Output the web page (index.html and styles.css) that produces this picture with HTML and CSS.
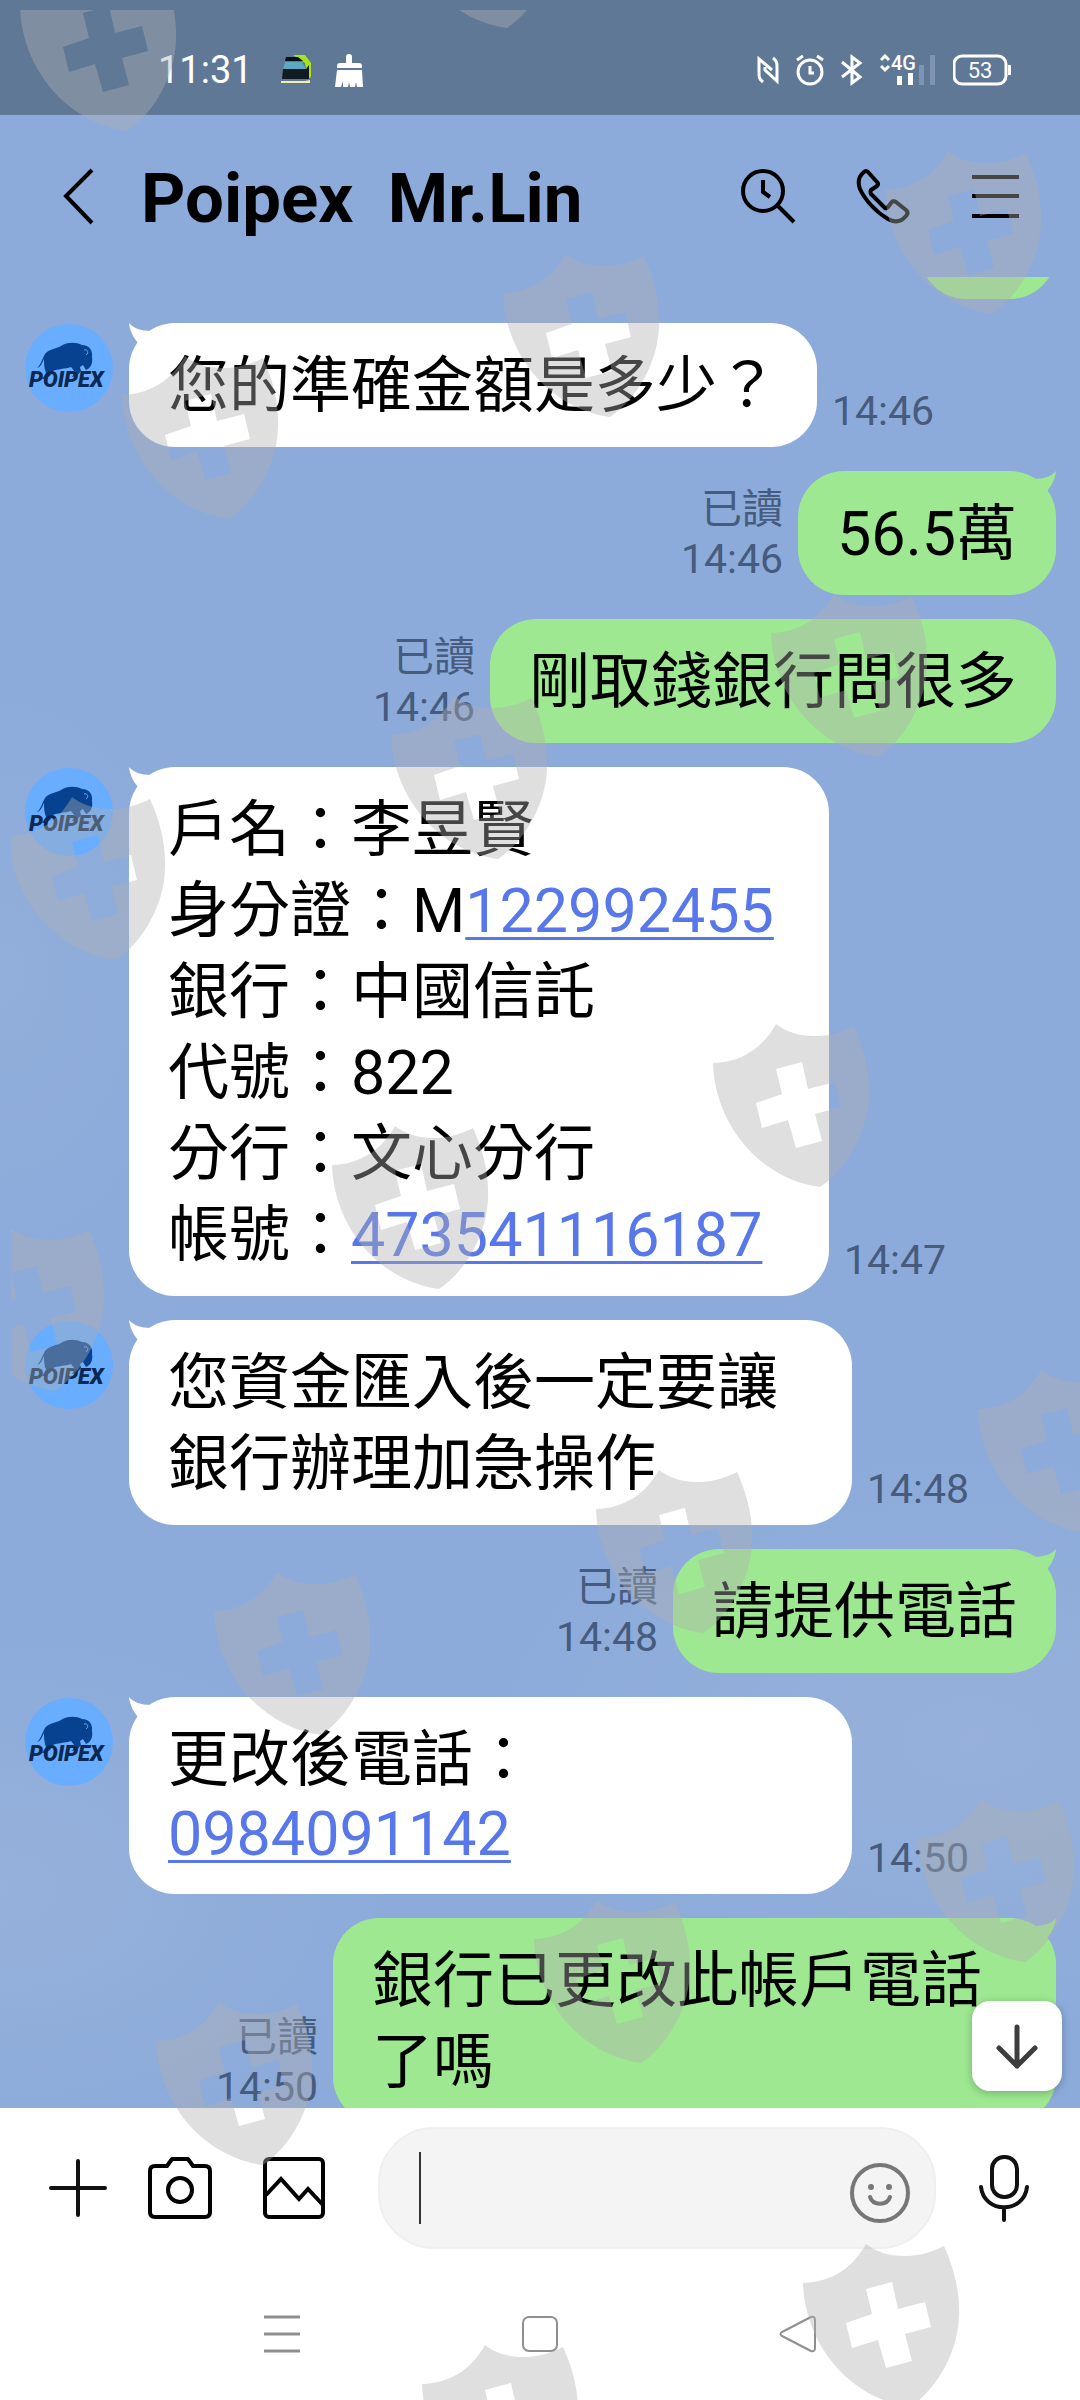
FILE: index.html
```html
<!DOCTYPE html>
<html lang="zh-Hant">
<head>
    <meta charset="utf-8">
    <meta name="viewport" content="width=device-width, initial-scale=1">
    <title>Poipex Mr.Lin</title>
    <link rel="stylesheet" href="styles.css">
</head>
<body>
    <!-- shared shapes -->
    <svg class="defs" width="0" height="0" aria-hidden="true">
        <symbol id="logo" viewBox="0 0 90 90">
            <circle cx="45" cy="45" r="44" fill="#68adff"/>
            <path d="M13 45 C17 42 18 36 21 31 C25 26 32 26 37 23 C43 19 52 19 58 22 C65 22 69 27 68 34 C69 40 67 45 62 47 L59 42 L56 44 L57 48 L53 53 L48 54 L51 49 L47 44 C41 46 33 46 29 48 L26 53 L21 56 L18 56 L22 50 C20 45 20 40 20 36 C18 40 17 44 13 45 Z" fill="#06428f"/>
            <path d="M60 27 C64 26 65 30 62 32" fill="none" stroke="#68adff" stroke-width="1"/>
            <text x="5" y="64" class="logo-text">POIPEX</text>
        </symbol>
        <symbol id="tail" viewBox="0 0 30 30">
            <path d="M0 0 C4 5 12 8 22 8 L30 6 L28 28 L4 28 L9 20 C4 14 1 8 0 0 Z"/>
        </symbol>
        <path id="shield" fill-rule="evenodd" d="M63 0 C79 13 110 18 141 2 C152 26 157 50 156 72 C155 108 134 145 107 163 C48 155 2 102 0 39 C28 38 49 25 63 0 Z M63 45 L69 70 L43 79 L49 104 L75 96 L83 124 L109 117 L102 90 L128 83 L122 58 L95 65 L89 38 Z"/>
    </svg>

    <div class="status-bar">
        <span class="clock">11:31</span>
        <svg class="train" width="30" height="30" viewBox="0 0 30 30">
            <path d="M12 0 H24 L30 8 V22 L27 24 L24 8 Z" fill="#a4e61a"/>
            <path d="M5 2 H17 L22 6 H4 Z" fill="#0a1018"/>
            <path d="M4 7 H21 L25 14 H2 Z" fill="#5fa8c4"/>
            <path d="M2 14 H25 L28 10 V24 H1 Z" fill="#121a22"/>
            <path d="M0 26 H24 L29 25 V28 H0 Z" fill="#f4edb0"/>
        </svg>
        <svg class="broom" width="28" height="34" viewBox="0 0 28 34" fill="#fff">
            <path d="M11 10 V4 A3 3 0 0 1 17 4 V10 H24 Q27 10 27 13 V15 H2 V13 Q2 10 5 10 Z"/>
            <path d="M2 17 H27 L28 34 H22 L21 29 L20 34 H15 L14 29 L13 34 H8 L8 28 L6 34 H0 Z"/>
        </svg>
        <div class="status-icons">
            <svg width="22" height="30" viewBox="0 0 22 30" fill="none" stroke="#fff" stroke-width="3">
                <path d="M6 27 C2 24 2 22 2 18 V4 L15 15 M16 3 C20 6 20 8 20 12 V26 L8 15 V12"/>
            </svg>
            <svg width="28" height="32" viewBox="0 0 28 32" fill="none" stroke="#fff" stroke-width="3">
                <circle cx="14" cy="18" r="12"/>
                <path d="M14 12 V19 H18 M1 6 L7 2 M27 6 L21 2"/>
            </svg>
            <svg width="22" height="32" viewBox="0 0 22 32" fill="none" stroke="#fff" stroke-width="3">
                <path d="M1 8 L19 23 L11 29 V3 L19 9 L1 23"/>
            </svg>
            <svg width="56" height="32" viewBox="0 0 56 32">
                <path d="M1 6 L5 2 L9 6 M1 12 L5 16 L9 12" fill="none" stroke="#fff" stroke-width="3"/>
                <text x="11" y="16" class="net-text">4G</text>
                <path d="M17 22 h5 v9 h-5 z M28 19 h5 v12 h-5 z" fill="#fff"/>
                <path d="M39 11 h5 v20 h-5 z M50 1 h5 v30 h-5 z" fill="#7f93b3"/>
            </svg>
            <svg width="58" height="32" viewBox="0 0 58 32">
                <rect x="1" y="2" width="52" height="28" rx="8" fill="none" stroke="#fff" stroke-width="3"/>
                <path d="M55 11 h3 v10 h-3 z" fill="#fff"/>
                <text x="27" y="24" text-anchor="middle" class="battery-text">53</text>
            </svg>
        </div>
    </div>

    <header class="header">
        <button class="icon-btn" aria-label="返回">
            <svg width="60" height="60" viewBox="0 0 60 60" fill="none" stroke="#000" stroke-width="4">
                <path d="M43 4 L17 30 L43 57"/>
            </svg>
        </button>
        <h1 class="title">Poipex  Mr.Lin</h1>
        <div class="header-actions">
            <button class="icon-btn" aria-label="搜尋">
                <svg width="60" height="60" viewBox="0 0 60 60" fill="none" stroke="#000" stroke-width="4">
                    <circle cx="25" cy="25" r="20"/>
                    <path d="M25 14 V26 L32 31 M39 39 L56 56"/>
                </svg>
            </button>
            <button class="icon-btn" aria-label="通話">
                <svg width="60" height="60" viewBox="0 0 60 60" fill="none" stroke="#000" stroke-width="4" stroke-linejoin="round">
                    <path d="M12 6 Q14 4 16 6 L25 16 Q27 18 25 20 L19 24 Q18 26 19 28 L33 42 Q34 43 36 41 L39 37 Q41 34 44 36 L54 44 Q57 47 54 50 C49 56 43 57 36 53 C24 46 13 34 8 23 C5 15 7 10 12 6 Z"/>
                </svg>
            </button>
            <button class="icon-btn" aria-label="選單">
                <svg width="60" height="60" viewBox="0 0 60 60" fill="none" stroke="#000" stroke-width="4">
                    <path d="M6 11 H53 M6 30 H53 M6 50 H53"/>
                </svg>
            </button>
        </div>
    </header>

    <main class="chat">
        <div class="messages">
            <div class="row sent">
                <div class="bubble short"></div>
            </div>

            <div class="row">
                <svg class="avatar"><use href="#logo"/></svg>
                <div class="bubble">
                    <svg class="tail"><use href="#tail"/></svg>
                    您的準確金額是多少？
                </div>
                <div class="meta">14:46</div>
            </div>

            <div class="row sent">
                <div class="meta">已讀<br>14:46</div>
                <div class="bubble">
                    <svg class="tail"><use href="#tail"/></svg>
                    56.5萬
                </div>
            </div>

            <div class="row sent">
                <div class="meta">已讀<br>14:46</div>
                <div class="bubble">剛取錢銀行問很多</div>
            </div>

            <div class="row">
                <svg class="avatar"><use href="#logo"/></svg>
                <div class="bubble account">
                    <svg class="tail"><use href="#tail"/></svg>
                    戶名：李昱賢<br>
                    身分證：M<a href="#">122992455</a><br>
                    銀行：中國信託<br>
                    代號：822<br>
                    分行：文心分行<br>
                    帳號：<a href="#">473541116187</a>
                </div>
                <div class="meta">14:47</div>
            </div>

            <div class="row">
                <svg class="avatar"><use href="#logo"/></svg>
                <div class="bubble">
                    <svg class="tail"><use href="#tail"/></svg>
                    您資金匯入後一定要讓銀行辦理加急操作
                </div>
                <div class="meta">14:48</div>
            </div>

            <div class="row sent">
                <div class="meta">已讀<br>14:48</div>
                <div class="bubble">
                    <svg class="tail"><use href="#tail"/></svg>
                    請提供電話
                </div>
            </div>

            <div class="row">
                <svg class="avatar"><use href="#logo"/></svg>
                <div class="bubble phone">
                    <svg class="tail"><use href="#tail"/></svg>
                    更改後電話：
                    <div class="number"><a href="#">0984091142</a></div>
                </div>
                <div class="meta">14:50</div>
            </div>

            <div class="row sent">
                <div class="meta">已讀<br>14:50</div>
                <div class="bubble">
                    <svg class="tail"><use href="#tail"/></svg>
                    銀行已更改此帳戶電話了嗎
                </div>
            </div>
        </div>

        <button class="scroll-down" aria-label="捲到最新">
            <svg width="60" height="60" viewBox="0 0 60 60" fill="none" stroke="#3d3d3d" stroke-width="5" stroke-linecap="round" stroke-linejoin="round">
                <path d="M30 11 V50 M12 32 L30 50 L48 32"/>
            </svg>
        </button>
    </main>

    <footer class="footer">
        <div class="composer">
            <button class="icon-btn" aria-label="更多">
                <svg width="72" height="72" viewBox="0 0 72 72" fill="none" stroke="#111" stroke-width="4" stroke-linecap="round">
                    <path d="M36 9 V63 M9 36 H63"/>
                </svg>
            </button>
            <button class="icon-btn camera" aria-label="相機">
                <svg width="72" height="72" viewBox="0 0 72 72" fill="none" stroke="#000" stroke-width="4" stroke-linejoin="round">
                    <path d="M11 14 H23 L28 7 H44 L49 14 H61 Q66 14 66 19 V60 Q66 65 61 65 H11 Q6 65 6 60 V19 Q6 14 11 14 Z"/>
                    <circle cx="36" cy="38" r="12"/>
                </svg>
            </button>
            <button class="icon-btn photo" aria-label="相片">
                <svg width="72" height="72" viewBox="0 0 72 72" fill="none" stroke="#000" stroke-width="4">
                    <rect x="7" y="7" width="58" height="58" rx="4"/>
                    <path d="M8 43 L23 27 L41 47 L50 37 L65 53"/>
                </svg>
            </button>
            <div class="input-box">
                <span class="caret"></span>
                <input type="text" aria-label="輸入訊息">
                <button class="icon-btn" aria-label="貼圖">
                    <svg width="64" height="72" viewBox="0 0 64 72">
                        <circle cx="32" cy="41" r="28" fill="none" stroke="#777" stroke-width="4"/>
                        <circle cx="23" cy="35" r="3" fill="#777"/>
                        <circle cx="41" cy="35" r="3" fill="#777"/>
                        <path d="M22 45 C25 54 39 54 42 45" fill="none" stroke="#777" stroke-width="4" stroke-linecap="round"/>
                    </svg>
                </button>
            </div>
            <button class="icon-btn mic" aria-label="語音">
                <svg width="72" height="72" viewBox="0 0 72 72" fill="none" stroke="#111" stroke-width="4" stroke-linecap="round">
                    <rect x="24" y="5" width="25" height="40" rx="12"/>
                    <path d="M13 35 C16 62 56 62 59 35 M36 56 V68"/>
                </svg>
            </button>
        </div>

        <nav class="system-nav">
            <button class="icon-btn" aria-label="最近使用">
                <svg width="48" height="48" viewBox="0 0 48 48" fill="none" stroke="#8f8f8f" stroke-width="3">
                    <path d="M6 7 H42 M6 24 H42 M6 41 H42"/>
                </svg>
            </button>
            <button class="icon-btn" aria-label="主畫面">
                <svg width="48" height="48" viewBox="0 0 48 48" fill="none" stroke="#8f8f8f" stroke-width="2">
                    <rect x="7" y="7" width="34" height="34" rx="6"/>
                </svg>
            </button>
            <button class="icon-btn" aria-label="返回">
                <svg width="48" height="48" viewBox="0 0 48 48" fill="none" stroke="#8f8f8f" stroke-width="2" stroke-linejoin="round">
                    <path d="M8 22 L37 7 Q41 6 41 10 V38 Q41 42 37 41 L8 26 Q5 24 8 22 Z"/>
                </svg>
            </button>
        </nav>
    </footer>

    <svg class="watermark" aria-hidden="true">
        <use href="#shield" x="9" y="-42"/>
        <use href="#shield" x="389" y="-145"/>
        <use href="#shield" x="874" y="141"/>
        <use href="#shield" x="492" y="244"/>
        <use href="#shield" x="111" y="346"/>
        <use href="#shield" x="760" y="584"/>
        <use href="#shield" x="380" y="686"/>
        <use href="#shield" x="-2" y="787"/>
        <use href="#shield" x="702" y="1014"/>
        <use href="#shield" x="321" y="1116"/>
        <use href="#shield" x="-63" y="1218"/>
        <use href="#shield" x="967" y="1360"/>
        <use href="#shield" x="585" y="1460"/>
        <use href="#shield" x="203" y="1562"/>
        <use href="#shield" x="907" y="1789"/>
        <use href="#shield" x="523" y="1890"/>
        <use href="#shield" x="145" y="1992"/>
        <use href="#shield" x="792" y="2234"/>
        <use href="#shield" x="411" y="2335"/>
    </svg>
</body>
</html>
```
FILE: styles.css
```css
* { box-sizing: border-box; }
body { margin: 0; height: 100vh; position: relative; display: flex; flex-direction: column; overflow: hidden; background: #8cabda; color: #000; font-family: Roboto, "Noto Sans CJK TC", sans-serif; }
svg { display: block; flex: none; }
button { margin: 0; padding: 0; border: none; background: none; cursor: pointer; }
.defs { position: absolute; }
.icon-btn { flex: none; }

/* status bar */
.status-bar { flex: none; height: 115px; padding: 24px 69px 0 158px; display: flex; align-items: center; background: #5f7896; color: #fff; }
.clock { font-size: 38px; line-height: 40px; }
.train { margin-left: 28px; }
.broom { margin-left: 24px; }
.status-icons { margin-left: auto; display: flex; align-items: center; gap: 17px; }
.net-text { font-size: 20px; font-weight: 500; fill: #fff; }
.battery-text { font-size: 22px; fill: #fff; }

/* header */
.header { flex: none; height: 162px; padding: 0 54px 0 49px; display: flex; align-items: center; }
.title { flex: 1; margin: 0 0 0 32px; padding-top: 6px; font-size: 69px; line-height: 80px; font-weight: 700; white-space: pre; }
.header-actions { display: flex; gap: 54px; }

/* chat */
.chat {
    flex: 1;
    min-height: 0;
    position: relative;
    overflow: hidden;
    background:
        radial-gradient(ellipse 400px 260px at 0 88%, rgba(160, 182, 218, 0.5), transparent),
        radial-gradient(ellipse 500px 300px at 90% 80%, rgba(160, 182, 218, 0.5), transparent),
        radial-gradient(ellipse 200px 300px at 0 38%, rgba(160, 182, 218, 0.3), transparent),
        #8cabda;
}
/* scrolled so that the first bubble is mostly out of view */
.messages { margin-top: -102px; padding: 0 24px; display: flex; flex-direction: column; gap: 24px; }
.row { display: flex; align-items: flex-start; }
.row.sent { justify-content: flex-end; }
.avatar { width: 90px; height: 90px; margin-right: 15px; }
.logo-text { font-size: 22px; font-weight: 900; font-style: italic; fill: #0b2852; }
.bubble { position: relative; max-width: 723px; min-height: 124px; padding: 23px 39px 20px; border-radius: 46px; background: #fff; font-size: 61px; line-height: 81px; }
.sent .bubble { background: #9ee892; }
.short { width: 136px; }
.account { min-width: 700px; }
.phone { width: 723px; }
.number { padding-bottom: 6px; line-height: 67px; }
.bubble a { color: #5777ea; text-decoration: underline; text-decoration-thickness: 3px; text-underline-offset: 5px; }
.tail { position: absolute; top: 0; left: 0; width: 30px; height: 30px; fill: #fff; }
.sent .tail { left: auto; right: 0; transform: scaleX(-1); fill: #9ee892; }
.meta { align-self: flex-end; margin: 0 15px 11px; font-size: 41px; line-height: 50px; text-align: right; color: #465b7d; }
.scroll-down { position: absolute; right: 18px; bottom: 17px; width: 90px; height: 90px; border-radius: 18px; background: #fff; box-shadow: 0 2px 8px rgba(0, 0, 0, 0.25); display: flex; align-items: center; justify-content: center; }

/* bottom */
.footer { flex: none; background: #fff; }
.composer { padding: 19px 40px 19px 42px; display: flex; align-items: center; }
.camera { margin-left: 30px; }
.photo { margin-left: 42px; }
.input-box { flex: 1; min-width: 0; height: 122px; margin: 0 32px 0 48px; padding: 0 22px 0 39px; display: flex; align-items: center; background: #f4f4f5; border: 2px solid #efefef; border-radius: 56px; }
.input-box input { flex: 1; min-width: 0; height: 80px; padding: 0; border: none; outline: none; background: none; font-family: inherit; font-size: 61px; }
.caret { flex: none; width: 2px; height: 72px; background: #333; }
.system-nav { height: 132px; display: flex; align-items: center; justify-content: center; gap: 210px; }

/* shield overlay */
.watermark { position: absolute; top: 10px; left: 11px; width: calc(100% - 11px); height: calc(100% - 10px); overflow: hidden; pointer-events: none; fill: rgba(175, 175, 175, 0.4); }
```
